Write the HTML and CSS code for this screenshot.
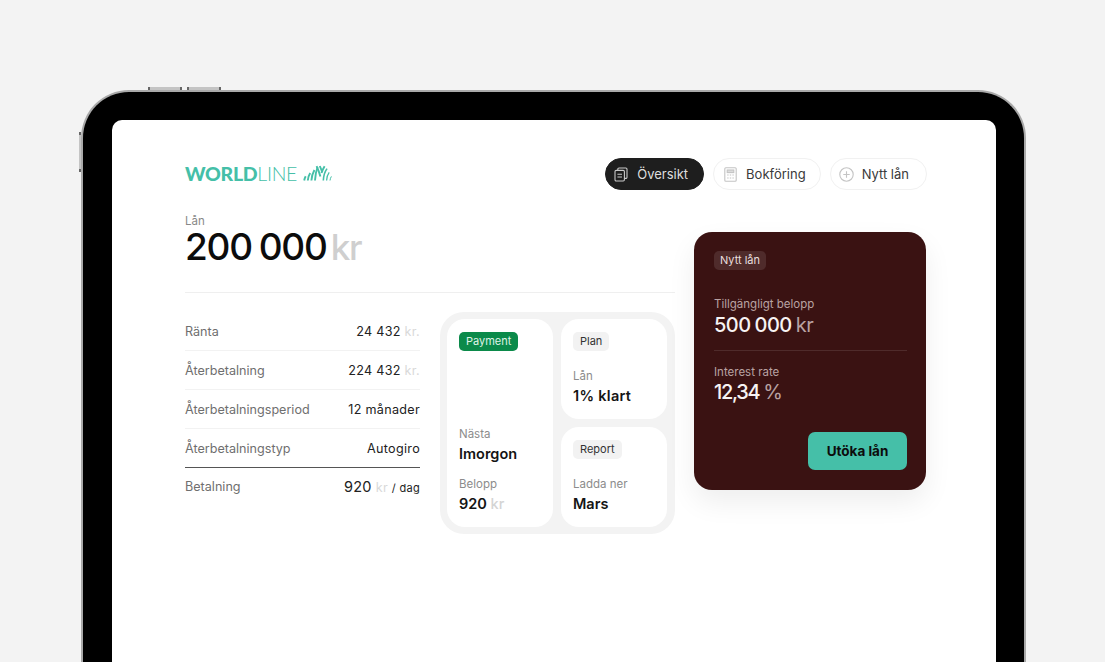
FILE: index.html
```html
<!DOCTYPE html>
<html lang="en">
<head>
<meta charset="UTF-8">
<meta name="viewport" content="width=device-width, initial-scale=1.0">
<title>Worldline lån</title>
<link rel="stylesheet" href="styles.css">
</head>
<body>
<div class="device">
  <span class="side-btn top-a"></span>
  <span class="side-btn top-b"></span>
  <span class="side-btn left-a"></span>
  <div class="screen">
    <header class="topbar">
      <div class="logo">
        <span class="logo-text"><b>WORLD</b>LINE</span>
        <svg class="logo-mark" width="30" height="16" viewBox="0 0 30 16" fill="none" stroke="#45bfa8" stroke-width="1.9">
          <path d="M1.2 15.5C1.4 14 1.9 12.6 2.7 11.2"/>
          <path d="M4.8 15.5C5 12.8 5.8 10.2 7.2 8"/>
          <path d="M8.4 15.5C8.6 11.8 9.6 8.2 11.4 5"/>
          <path d="M12 15.5C12.2 10.6 13 6.2 14.6 2"/>
          <path d="M13.6 1.2C15.4 5 16.6 8.6 17.4 11.5"/>
          <path d="M16.8 1L19.4 7.4"/>
          <path d="M21.6 1.2C20.4 3.2 19.4 5.2 18.4 8"/>
          <path d="M24 3.6C21.8 6.6 20.6 10.2 20.3 15.5" stroke-width="1.6"/>
          <path d="M26.2 7.4C24.6 9.4 23.8 12.2 23.6 15.5" stroke-width="1.3"/>
          <path d="M28.4 11.4C27.6 12.6 27.2 14 27 15.5" stroke-width="1"/>
        </svg>
      </div>
      <nav class="nav">
        <a class="pill active">
          <svg width="14" height="15" viewBox="0 0 14 15" fill="none" stroke="#c9c9c9" stroke-width="1.1">
            <path d="M3.8 3.4V2.2A1.2 1.2 0 0 1 5 1H11.8A1.2 1.2 0 0 1 13 2.2V10.2A1.2 1.2 0 0 1 11.8 11.4H10.4"/>
            <rect x="1" y="3.4" width="9.4" height="10.6" rx="1.2"/>
            <path d="M3.4 7.2H8M3.4 10H8"/>
          </svg>
          Översikt
        </a>
        <a class="pill pill-book">
          <svg width="13" height="15" viewBox="0 0 13 15" fill="none" stroke="#c4c4c4" stroke-width="1.1">
            <rect x="0.8" y="0.8" width="11.4" height="13.4" rx="1"/>
            <rect x="3.2" y="3" width="6.6" height="2.6" fill="#dcdcdc"/>
            <path d="M3.2 8H4.6M5.8 8H7.2M8.4 8H9.8M3.2 11H4.6M5.8 11H7.2M8.4 11H9.8"/>
          </svg>
          Bokföring
        </a>
        <a class="pill pill-new">
          <svg width="15" height="15" viewBox="0 0 15 15" fill="none" stroke="#c4c4c4" stroke-width="1.1">
            <circle cx="7.5" cy="7.5" r="6.7"/>
            <path d="M7.5 4.3V10.7M4.3 7.5H10.7"/>
          </svg>
          Nytt lån
        </a>
      </nav>
    </header>

    <main class="content">
      <section class="left">
        <div class="loan-label">Lån</div>
        <div class="loan-amount">200 000<span class="unit">kr</span></div>
        <div class="details">
          <div class="table">
            <div class="row"><span class="key">Ränta</span><span class="val">24 432 <i>kr.</i></span></div>
            <div class="row"><span class="key">Återbetalning</span><span class="val">224 432 <i>kr.</i></span></div>
            <div class="row"><span class="key">Återbetalningsperiod</span><span class="val">12 månader</span></div>
            <div class="row dark"><span class="key">Återbetalningstyp</span><span class="val">Autogiro</span></div>
            <div class="row last"><span class="key">Betalning</span><span class="val"><b>920</b> <i>kr</i> <small>/ dag</small></span></div>
          </div>
          <div class="tiles">
            <div class="tile tall">
              <span class="tag green">Payment</span>
              <div class="tile-info push">
                <span class="tile-label">Nästa</span>
                <strong>Imorgon</strong>
              </div>
              <div class="tile-info second">
                <span class="tile-label">Belopp</span>
                <strong>920 <i>kr</i></strong>
              </div>
            </div>
            <div class="tile">
              <span class="tag">Plan</span>
              <div class="tile-info push">
                <span class="tile-label">Lån</span>
                <strong class="spaced">1% klart</strong>
              </div>
            </div>
            <div class="tile">
              <span class="tag">Report</span>
              <div class="tile-info push">
                <span class="tile-label">Ladda ner</span>
                <strong>Mars</strong>
              </div>
            </div>
          </div>
        </div>
      </section>

      <aside class="offer">
        <span class="offer-tag">Nytt lån</span>
        <div class="offer-block first">
          <span class="offer-label">Tillgängligt belopp</span>
          <div class="offer-value">500 000<span>kr</span></div>
        </div>
        <div class="offer-block">
          <span class="offer-label">Interest rate</span>
          <div class="offer-value tight">12,34<span>%</span></div>
        </div>
        <button class="extend">Utöka lån</button>
      </aside>
    </main>
  </div>
</div>
</body>
</html>
```

FILE: styles.css
```css
html, body {
  height: 100%;
}
body {
  margin: 0;
  background-color: #f3f3f3;
  font-family: Inter, 'Liberation Sans', sans-serif;
  overflow: hidden;
  padding: 90px 79px 0 81px;
  box-sizing: border-box;
  color: #111;
}
.device {
  position: relative;
  height: 572px;
  background-color: #000;
  border: 2px solid #a9a9a9;
  border-bottom: none;
  border-radius: 48px 48px 0 0;
  padding: 28px 28px 0 29px;
  box-sizing: border-box;
}
.side-btn {
  position: absolute;
  background-color: #c4c4c4;
}
.top-a, .top-b {
  top: -5px;
  width: 34px;
  height: 3px;
  border-left: 2px solid #666;
  border-right: 2px solid #666;
  box-sizing: border-box;
}
.top-a { left: 65px; }
.top-b { left: 104px; }
.left-a {
  left: -4px;
  top: 40px;
  width: 2px;
  height: 34px;
  border-top: 3px solid #666;
  border-bottom: 3px solid #666;
}
.screen {
  background-color: #fff;
  border-radius: 10px 10px 0 0;
  height: 542px;
  padding: 38px 70px 0 73px;
  box-sizing: border-box;
}

.topbar {
  display: flex;
  justify-content: space-between;
  align-items: center;
  height: 32px;
}
.logo {
  display: flex;
  align-items: center;
  gap: 6px;
  margin-top: -2px;
  color: #45bfa8;
}
.logo-text {
  font-family: Lato, sans-serif;
  font-size: 19.5px;
  font-weight: 300;
  letter-spacing: -0.3px;
}
.logo-text b {
  font-weight: 900;
}
.nav {
  display: flex;
  gap: 9px;
  margin-right: -1px;
}
.pill {
  display: flex;
  align-items: center;
  gap: 9px;
  height: 32px;
  box-sizing: border-box;
  padding: 0 15px 0 8px;
  border: 1px solid #f1f1f1;
  border-radius: 16px;
  font-size: 13px;
  color: #3a3a3a;
}
.pill.active {
  background-color: #1e1e1e;
  border-color: #1e1e1e;
  color: #dedede;
}
.pill-book {
  padding: 0 14px 0 10px;
}
.pill-new {
  padding-right: 17px;
  gap: 8px;
}

.content {
  display: flex;
  justify-content: space-between;
  margin-top: 22px;
}
.left {
  width: 490px;
}
.loan-label {
  font-size: 11.5px;
  line-height: 14px;
  margin-top: 2px;
  color: #888;
}
.loan-amount {
  font-size: 37px;
  line-height: 34px;
  font-weight: 500;
  letter-spacing: -1.2px;
  word-spacing: -2px;
  color: #0c0c0c;
  margin-top: 2px;
  padding-bottom: 28px;
  border-bottom: 1px solid #efefef;
}
.unit {
  font-size: 35px;
  color: #cfcfcf;
  margin-left: 4px;
}
.details {
  display: flex;
  gap: 20px;
  margin-top: 19px;
}
.table {
  width: 235px;
}
.row {
  display: flex;
  justify-content: space-between;
  align-items: center;
  height: 38px;
  border-bottom: 1px solid #f2f2f2;
  font-size: 12.6px;
}
.row.dark {
  border-bottom-color: #555;
}
.row.last {
  height: 36px;
  border-bottom: none;
}
.key {
  color: #6f6f6f;
}
.val {
  color: #222;
  letter-spacing: 0.3px;
}
.val i {
  font-style: normal;
  color: #d9d9d9;
}
.val b {
  font-weight: 400;
  font-size: 14.5px;
}
.val small {
  font-size: 11px;
}
.tiles {
  width: 235px;
  height: 222px;
  box-sizing: border-box;
  padding: 7px 8px 7px 7px;
  background-color: #f3f3f3;
  border-radius: 24px;
  display: grid;
  grid-template-columns: 106px 106px;
  grid-template-rows: 100px 100px;
  gap: 8px;
}
.tile {
  background-color: #fff;
  border-radius: 18px;
  padding: 13px 12px 14px 12px;
  display: flex;
  flex-direction: column;
  align-items: flex-start;
}
.tile.tall {
  grid-row: span 2;
}
.tag {
  font-size: 11px;
  line-height: 19px;
  padding: 0 7px;
  border-radius: 5px;
  background-color: #f2f2f2;
  color: #333;
}
.tag.green {
  background-color: #0b8a4a;
  color: #dff3e7;
}
.tile-info {
  display: flex;
  flex-direction: column;
  gap: 4px;
}
.tile-info.push {
  margin-top: auto;
}
.tile-info.second {
  margin-top: 14px;
}
.tile-label {
  font-size: 11.5px;
  line-height: 14px;
  color: #8c8c8c;
}
.tile-info strong {
  font-size: 14.5px;
  line-height: 18px;
  font-weight: 600;
  color: #141414;
}
.tile-info strong.spaced {
  letter-spacing: 0.3px;
}
.tile-info strong i {
  font-style: normal;
  font-weight: 500;
  color: #d4d4d4;
}

.offer {
  width: 232px;
  height: 258px;
  box-sizing: border-box;
  margin-top: 20px;
  padding: 19px 19px 20px 20px;
  background-color: #3a1212;
  border-radius: 18px;
  box-shadow: 0 12px 28px rgba(0, 0, 0, 0.07);
  display: flex;
  flex-direction: column;
  align-items: flex-start;
}
.offer-tag {
  font-size: 11px;
  line-height: 19px;
  padding: 0 6px;
  border-radius: 5px;
  background-color: #4f2b2b;
  color: #e9dfdf;
}
.offer-block {
  width: 100%;
  color: #fff;
  padding-top: 14px;
}
.offer-block.first {
  margin-top: 27px;
  padding-top: 0;
  padding-bottom: 11px;
  border-bottom: 1px solid #4f2b2b;
}
.offer-block.first .offer-value {
  margin-top: 1px;
}
.offer-label {
  display: block;
  font-size: 11.5px;
  line-height: 14px;
  color: #b9a2a2;
}
.offer-value {
  font-size: 20px;
  line-height: 27px;
  font-weight: 500;
  color: #f7f3f3;
  letter-spacing: -0.5px;
  word-spacing: -1px;
}
.offer-value.tight {
  letter-spacing: -1.3px;
}
.offer-value span {
  font-weight: 400;
  color: #b9a2a2;
  margin-left: 4px;
}
.extend {
  margin-top: auto;
  margin-left: auto;
  width: 99px;
  height: 38px;
  border: none;
  border-radius: 7px;
  background-color: #45bfa8;
  font-family: inherit;
  font-size: 13.5px;
  font-weight: 700;
  color: #0c0c0c;
}
```
